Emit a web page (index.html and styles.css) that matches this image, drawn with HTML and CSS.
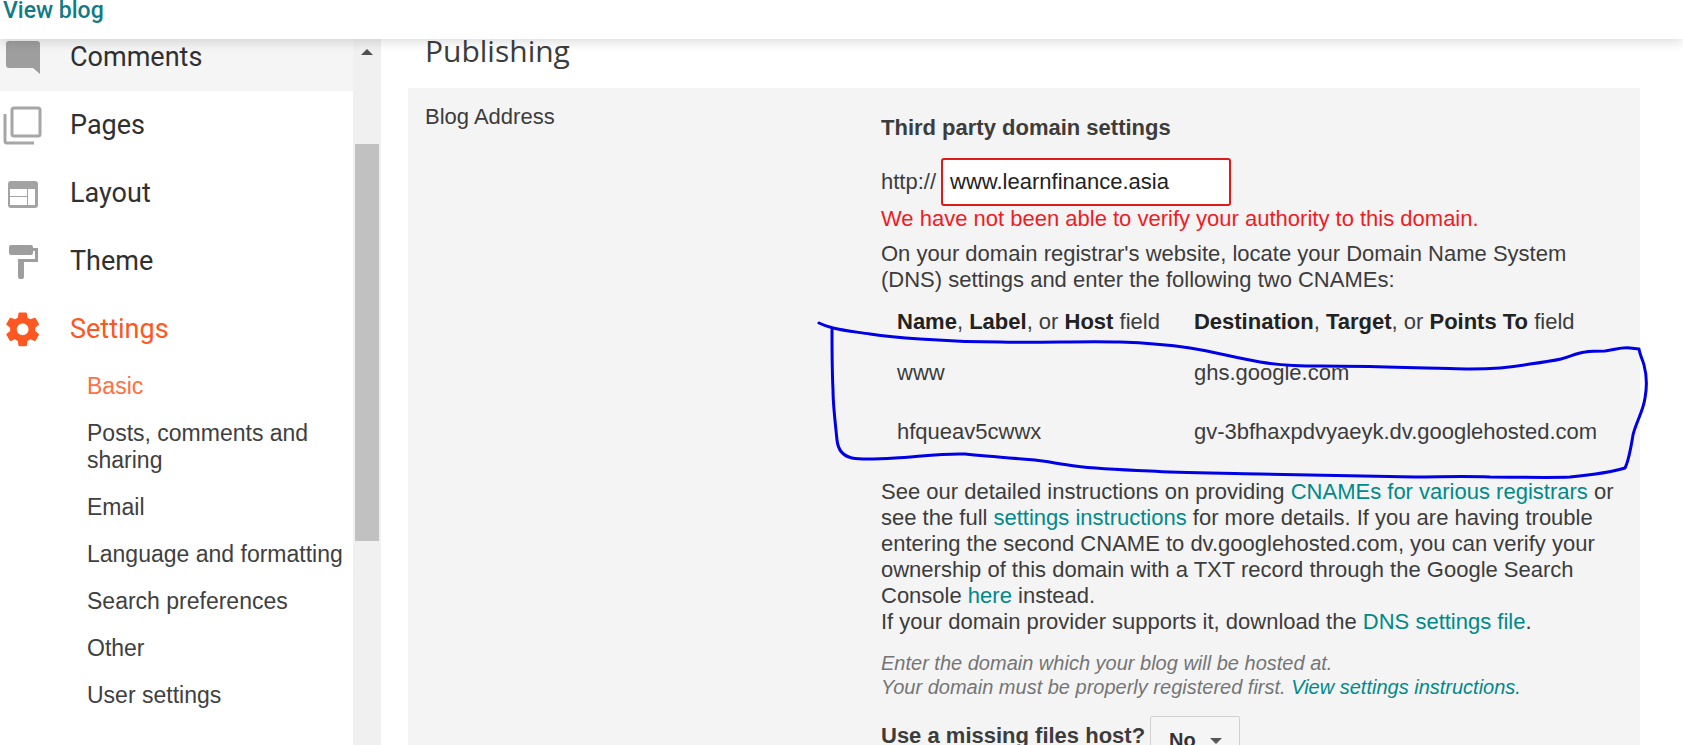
FILE: index.html
```html
<!DOCTYPE html>
<html lang="en">
<head>
    <meta charset="UTF-8">
    <meta name="viewport" content="width=device-width, initial-scale=1.0">
    <title>Blog settings</title>
    <link rel="stylesheet" href="styles.css">
</head>
<body>
    <header class="topbar">
        <a href="#">View blog</a>
    </header>

    <div class="page">
        <nav class="sidebar">
            <ul class="menu">
                <li class="hovered"><a href="#">
                    <svg viewBox="0 0 44 44"><path fill="#9e9e9e" d="M9 6h28a3 3 0 0 1 3 3v30l-7-6H9a3 3 0 0 1-3-3V9a3 3 0 0 1 3-3z"/></svg>
                    Comments</a></li>
                <li><a href="#">
                    <svg viewBox="0 0 44 44"><g fill="none" stroke="#a6a6a6" stroke-width="3"><rect x="12" y="5" width="28" height="28" rx="2"/><path d="M5 11v27a2 2 0 0 0 2 2h27"/></g></svg>
                    Pages</a></li>
                <li><a href="#">
                    <svg viewBox="0 0 44 44"><path fill="#a3a3a3" fill-rule="evenodd" d="M11 10h24a3 3 0 0 1 3 3v21a3 3 0 0 1-3 3H11a3 3 0 0 1-3-3V13a3 3 0 0 1 3-3zm-1 8v7h17v-7zm0 8v8h17v-8zm18-8v16h7V18z"/></svg>
                    Layout</a></li>
                <li><a href="#">
                    <svg viewBox="0 0 44 44"><path fill="#9e9e9e" d="M11 6h20a2 2 0 0 1 2 2v1h5v14H24v15a2 2 0 0 1-2 2h-2a2 2 0 0 1-2-2V20h17v-8h-2v2a2 2 0 0 1-2 2H11a2 2 0 0 1-2-2V8a2 2 0 0 1 2-2z"/></svg>
                    Theme</a></li>
                <li class="active"><a href="#">
                    <svg viewBox="0 0 44 44"><path transform="translate(2.500 2.200) scale(1.680)" fill="#ff5722" d="M19.430 12.980c.04-.32.070-.64.070-.98s-.03-.66-.07-.98l2.110-1.650c.19-.15.240-.42.120-.64l-2-3.460c-.12-.22-.39-.3-.61-.22l-2.490 1c-.52-.4-1.080-.73-1.690-.98l-.38-2.650C14.460 2.180 14.250 2 14 2h-4c-.25 0-.46.180-.49.420l-.38 2.650c-.61.250-1.170.590-1.690.980l-2.490-1c-.23-.09-.49 0-.61.220l-2 3.460c-.13.220-.07.490.120.640l2.110 1.650c-.04.320-.07.650-.07.980s.03.660.070.980l-2.110 1.650c-.19.150-.24.420-.12.640l2 3.460c.12.220.390.300.610.220l2.490-1c.52.400 1.080.730 1.690.980l.38 2.650c.03.240.240.420.490.420h4c.25 0 .46-.18.490-.42l.38-2.650c.61-.25 1.170-.59 1.690-.98l2.490 1c.23.090.490 0 .61-.22l2-3.460c.12-.22.070-.49-.12-.64l-2.110-1.650zM12 15.500c-1.930 0-3.500-1.570-3.500-3.500s1.570-3.500 3.500-3.500 3.500 1.570 3.500 3.500-1.570 3.500-3.500 3.500z"/></svg>
                    Settings</a></li>
            </ul>
            <ul class="submenu">
                <li><a class="current" href="#">Basic</a></li>
                <li><a href="#">Posts, comments and sharing</a></li>
                <li><a href="#">Email</a></li>
                <li><a href="#">Language and formatting</a></li>
                <li><a href="#">Search preferences</a></li>
                <li><a href="#">Other</a></li>
                <li><a href="#">User settings</a></li>
            </ul>
        </nav>

        <div class="scrollbar">
            <svg class="scroll-up" viewBox="0 0 12 6"><path fill="#505050" d="M6 0l6 6H0z"/></svg>
            <div class="scroll-thumb"></div>
        </div>

        <main class="content">
            <h1>Publishing</h1>
            <section class="panel">
                <div class="panel-label">Blog Address</div>
                <div class="panel-fields">
                    <h2>Third party domain settings</h2>
                    <div class="address">
                        <label for="domain">http://</label>
                        <input type="text" id="domain" value="www.learnfinance.asia">
                    </div>
                    <p class="error">We have not been able to verify your authority to this domain.</p>
                    <p class="intro">On your domain registrar's website, locate your Domain Name System (DNS) settings and enter the following two CNAMEs:</p>

                    <div class="records">
                        <table>
                            <tr>
                                <th><b>Name</b>, <b>Label</b>, or <b>Host</b> field</th>
                                <th><b>Destination</b>, <b>Target</b>, or <b>Points To</b> field</th>
                            </tr>
                            <tr>
                                <td>www</td>
                                <td>ghs.google.com</td>
                            </tr>
                            <tr>
                                <td>hfqueav5cwwx</td>
                                <td>gv-3bfhaxpdvyaeyk.dv.googlehosted.com</td>
                            </tr>
                        </table>
                        <!-- pen mark round the two records -->
                        <svg class="pen" viewBox="815 320 840 160">
                            <path d="M819 323C825 326 829 327 833 328C845 331 857 332 870 334C890 337 905 338 920 339C947 341 970 342 1000 342C1040 343 1080 341 1120 342C1150 343 1170 345 1190 348C1215 352 1236 358 1260 362C1278 365 1300 366 1320 366C1360 366 1430 368 1470 369C1500 369 1515 367 1530 364C1545 362 1552 361 1561 359C1570 357 1576 353 1585 352C1592 351 1599 351 1605 351C1615 350 1620 347 1630 348L1639 349C1640 355 1643 361 1644 365C1647 376 1647 387 1645 398C1643 412 1636 422 1633 435C1631 447 1629 460 1625 468C1612 472 1590 475 1570 477C1550 478 1520 477 1490 477C1460 476 1440 477 1415 477C1370 476 1310 475 1260 474C1220 473 1180 473 1150 471C1125 470 1090 468 1075 466C1060 464 1045 461 1035 460C1010 458 985 456 965 454C945 453 915 457 895 458C880 459 862 460 852 458C843 456 838 450 837 440C835 420 833 405 833 390C832 370 832 350 832 330"/>
                        </svg>
                    </div>

                    <p>See our detailed instructions on providing <a href="#">CNAMEs for various registrars</a> or see the full <a href="#">settings instructions</a> for more details. If you are having trouble entering the second CNAME to dv.googlehosted.com, you can verify your ownership of this domain with a TXT record through the Google Search Console <a href="#">here</a> instead.</p>
                    <p>If your domain provider supports it, download the <a href="#">DNS settings file</a>.</p>
                    <p class="hint">Enter the domain which your blog will be hosted at.<br>Your domain must be properly registered first. <a href="#">View settings instructions.</a></p>

                    <div class="missing">
                        <label for="missingHost">Use a missing files host?</label>
                        <span class="select">
                            <select id="missingHost">
                                <option>No</option>
                                <option>Yes</option>
                            </select>
                            <svg viewBox="0 0 12 6"><path fill="#555" d="M0 0h12L6 6z"/></svg>
                        </span>
                    </div>
                </div>
            </section>
        </main>
    </div>
</body>
</html>
```
FILE: styles.css
```css
* {
    box-sizing: border-box;
}

body {
    font-family: "Liberation Sans", Arial, sans-serif;
    font-size: 22px;
    line-height: 26px;
    color: #3c3c3c;
    background: white;
    margin: 0;
    height: 100vh;
    overflow: hidden;
    display: flex;
    flex-direction: column;
}

a {
    color: #00898a;
    text-decoration: none;
}

ul, p, h1, h2 {
    margin: 0;
    padding: 0;
}

ul {
    list-style: none;
}

.topbar {
    flex: none;
    height: 39px;
    padding-left: 3px;
    background: white;
    box-shadow: 0 2px 12px rgba(0, 0, 0, 0.16);
    font-family: Roboto, sans-serif;
    font-size: 23px;
    line-height: 22px;
    font-weight: 500;
    z-index: 1;
}

.topbar a {
    color: #117b85;
}

.page {
    flex: 1;
    min-height: 0;
    display: flex;
}

.sidebar {
    flex: none;
    width: 353px;
    overflow: hidden;
}

/* list is scrolled a little, so the first row is cut by the top bar */
.menu {
    margin-top: -16px;
    font-family: Roboto, sans-serif;
    font-size: 27px;
}

.menu a {
    display: flex;
    align-items: center;
    gap: 26px;
    height: 68px;
    color: #303030;
}

.menu svg {
    width: 44px;
    height: 44px;
}

.menu .hovered {
    background: #f5f5f5;
}

.menu .active a {
    color: #ff5722;
}

.submenu {
    padding-left: 87px;
    font-size: 23px;
    line-height: 27px;
}

.submenu a {
    display: block;
    padding: 10px 0;
    color: #404040;
}

.submenu .current {
    color: #ff7043;
}

.scrollbar {
    flex: none;
    width: 28px;
    padding: 10px 2px 0;
    background: #f0f0f0;
    display: flex;
    flex-direction: column;
    align-items: center;
}

.scroll-up {
    width: 12px;
    height: 6px;
}

.scroll-thumb {
    width: 100%;
    height: 57%;
    margin-top: 89px;
    background: #c1c1c1;
}

.content {
    flex: 1;
    min-width: 0;
    padding: 1px 43px 0 27px;
}

h1 {
    padding-left: 17px;
    margin-bottom: 26px;
    font-family: "Open Sans", sans-serif;
    font-size: 30px;
    line-height: 22px;
    font-weight: 400;
}

.panel {
    display: grid;
    grid-template-columns: 456px 1fr;
    padding: 0 24px 0 17px;
    background: #f4f4f4;
}

.panel-label {
    padding-top: 16px;
}

.panel-fields {
    padding-top: 27px;
}

h2 {
    font-size: 22px;
    line-height: 26px;
}

.address {
    display: flex;
    align-items: center;
    gap: 5px;
    margin-top: 17px;
}

.address input {
    width: 290px;
    height: 48px;
    padding: 0 7px;
    border: 2px solid #dd1b1b;
    border-radius: 3px;
    background: white;
    color: #222;
    font: inherit;
}

.error {
    color: #ee1c25;
}

.intro {
    margin-top: 9px;
}

.records {
    position: relative;
    margin-bottom: 17px;
}

table {
    border-collapse: collapse;
}

th {
    padding: 16px 18px 9px 16px;
    text-align: left;
    font-weight: 400;
    white-space: nowrap;
}

th b {
    color: #222;
}

td {
    padding: 16px 18px 17px 16px;
}

.pen {
    position: absolute;
    left: -66px;
    top: 27px;
    width: 840px;
    height: 160px;
    fill: none;
    stroke: #0000e6;
    stroke-width: 3;
    stroke-linecap: round;
    stroke-linejoin: round;
    pointer-events: none;
}

.hint {
    margin-top: 16px;
    font-size: 20px;
    line-height: 24px;
    font-style: italic;
    color: #757575;
}

.missing {
    display: flex;
    align-items: flex-start;
    gap: 5px;
    margin-top: 17px;
    font-weight: bold;
    line-height: 40px;
}

.select {
    position: relative;
}

.select select {
    appearance: none;
    display: block;
    width: 90px;
    height: 48px;
    padding: 0 18px;
    border: 1px solid #d0d0d0;
    border-radius: 2px;
    background: #f5f5f5;
    color: #333;
    font: bold 20px "Liberation Sans", Arial, sans-serif;
}

.select svg {
    position: absolute;
    right: 18px;
    top: 22px;
    width: 12px;
    height: 6px;
    pointer-events: none;
}
```
